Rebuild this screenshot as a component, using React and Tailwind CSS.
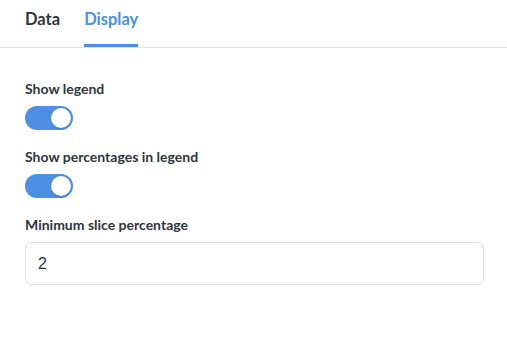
import { useState } from 'react'

function Toggle({ on, onChange }) {
  return (
    <button
      onClick={() => onChange(!on)}
      className={`relative block w-[48px] h-[24px] rounded-full ${on ? 'bg-[#4c8fe4]' : 'bg-[#e6e9ec]'}`}
    >
      <span
        className={`absolute top-[2px] w-[20px] h-[20px] rounded-full bg-white shadow-sm ${on ? 'left-[26px]' : 'left-[2px]'}`}
      />
    </button>
  )
}

export default function App() {
  const [tab, setTab] = useState('display')
  const [legend, setLegend] = useState(true)
  const [pct, setPct] = useState(true)
  const [minSlice, setMinSlice] = useState('2')

  return (
    <div className="w-[507px] h-[353px] bg-white" style={{ fontFamily: 'Lato, "Liberation Sans", sans-serif' }}>
      {/* Tabs */}
      <div className="flex gap-6 px-[25px] border-b border-[#dcdfe3]">
        {[['data', 'Data'], ['display', 'Display']].map(([id, label]) => (
          <button
            key={id}
            onClick={() => setTab(id)}
            className={`pt-[6px] pb-[12px] text-[16.5px] font-bold leading-[26px] border-b-[3px] ${
              tab === id ? 'text-[#4c8fe4] border-[#4c8fe4]' : 'text-[#2e353b] border-transparent'
            }`}
          >
            {label}
          </button>
        ))}
      </div>

      {/* Display settings */}
      <div className="pl-[25px] pr-[23px] pt-[32px]">
        <div className="mb-[18px]">
          <p className="text-[14px] font-bold text-[#2e353b] leading-[18px] mb-[8px]">Show legend</p>
          <Toggle on={legend} onChange={setLegend} />
        </div>
        <div className="mb-[18px]">
          <p className="text-[14px] font-bold text-[#2e353b] leading-[18px] mb-[8px]">Show percentages in legend</p>
          <Toggle on={pct} onChange={setPct} />
        </div>
        <div>
          <p className="text-[14px] font-bold text-[#2e353b] leading-[18px] mb-[8px]">Minimum slice percentage</p>
          <input
            value={minSlice}
            onChange={(e) => setMinSlice(e.target.value)}
            className="block w-full h-[43px] px-[12px] rounded-[6px] border border-[#dcdfe3] text-[16px] text-[#2e353b] outline-none"
            style={{ fontFamily: '"Liberation Sans", Arial, sans-serif' }}
          />
        </div>
      </div>
    </div>
  )
}
